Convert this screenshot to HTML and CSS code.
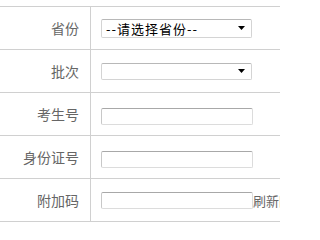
FILE: index.html
```html
<!DOCTYPE html>
<html lang="zh-CN">
<head>
<meta charset="utf-8">
<title>查询</title>
<link rel="stylesheet" href="styles.css">
</head>
<body>
<table class="form">
  <tr>
    <td class="label">省份</td>
    <td class="field">
      <div class="select tall"><span>--请选择省份--</span><svg class="arrow" width="7" height="4" viewBox="0 0 7 4"><path d="M0 0H7L3.5 4Z" fill="#000"/></svg></div>
    </td>
  </tr>
  <tr>
    <td class="label">批次</td>
    <td class="field">
      <div class="select"><span></span><svg class="arrow" width="7" height="4" viewBox="0 0 7 4"><path d="M0 0H7L3.5 4Z" fill="#000"/></svg></div>
    </td>
  </tr>
  <tr>
    <td class="label">考生号</td>
    <td class="field"><input class="text" type="text"></td>
  </tr>
  <tr>
    <td class="label">身份证号</td>
    <td class="field"><input class="text" type="text"></td>
  </tr>
  <tr>
    <td class="label">附加码</td>
    <td class="field"><div class="captcha"><input class="text" type="text"><span class="refresh">刷新图片</span></div></td>
  </tr>
</table>
</body>
</html>
```

FILE: styles.css
```css
html, body {
  margin: 0;
  padding: 0;
  background: #fff;
  overflow: hidden;
}
body {
  padding-top: 6px;
  font-family: "Noto Sans CJK SC", "Noto Sans", sans-serif;
}
.form {
  width: 280px;
  border-collapse: collapse;
  table-layout: fixed;
}
.form tr {
  height: 43px;
}
.form td {
  border-top: 1px solid #d0d0d0;
  border-bottom: 1px solid #d0d0d0;
  padding: 0;
  vertical-align: middle;
}
.label {
  width: 79px;
  padding-right: 11px !important;
  text-align: right;
  font-size: 14px;
  color: #666;
  border-right: 1px solid #d0d0d0;
}
.field {
  padding-left: 10px !important;
  white-space: nowrap;
  overflow: hidden;
}
.select {
  box-sizing: border-box;
  width: 151px;
  height: 17px;
  border: 1px solid #d4d4d4;
  border-top-color: #b8b8b8;
  border-radius: 2px;
  display: flex;
  align-items: center;
  justify-content: space-between;
  padding: 0 6px 0 4px;
  font-size: 13px;
  letter-spacing: 1px;
  color: #000;
  line-height: 1;
}
.select.tall {
  height: 19px;
}
.arrow {
  flex: none;
  display: block;
}
.text {
  box-sizing: border-box;
  width: 152px;
  height: 17px;
  margin: 0;
  padding: 0 2px;
  border: 1px solid #dcdcdc;
  border-top-color: #a8a8a8;
  border-left-color: #c8c8c8;
  border-radius: 2px;
  vertical-align: middle;
  font-size: 12px;
}
.captcha {
  display: flex;
  align-items: center;
}
.captcha .text {
  flex: none;
}
.refresh {
  flex: none;
  font-size: 13px;
  line-height: 17px;
  color: #666;
}
```
